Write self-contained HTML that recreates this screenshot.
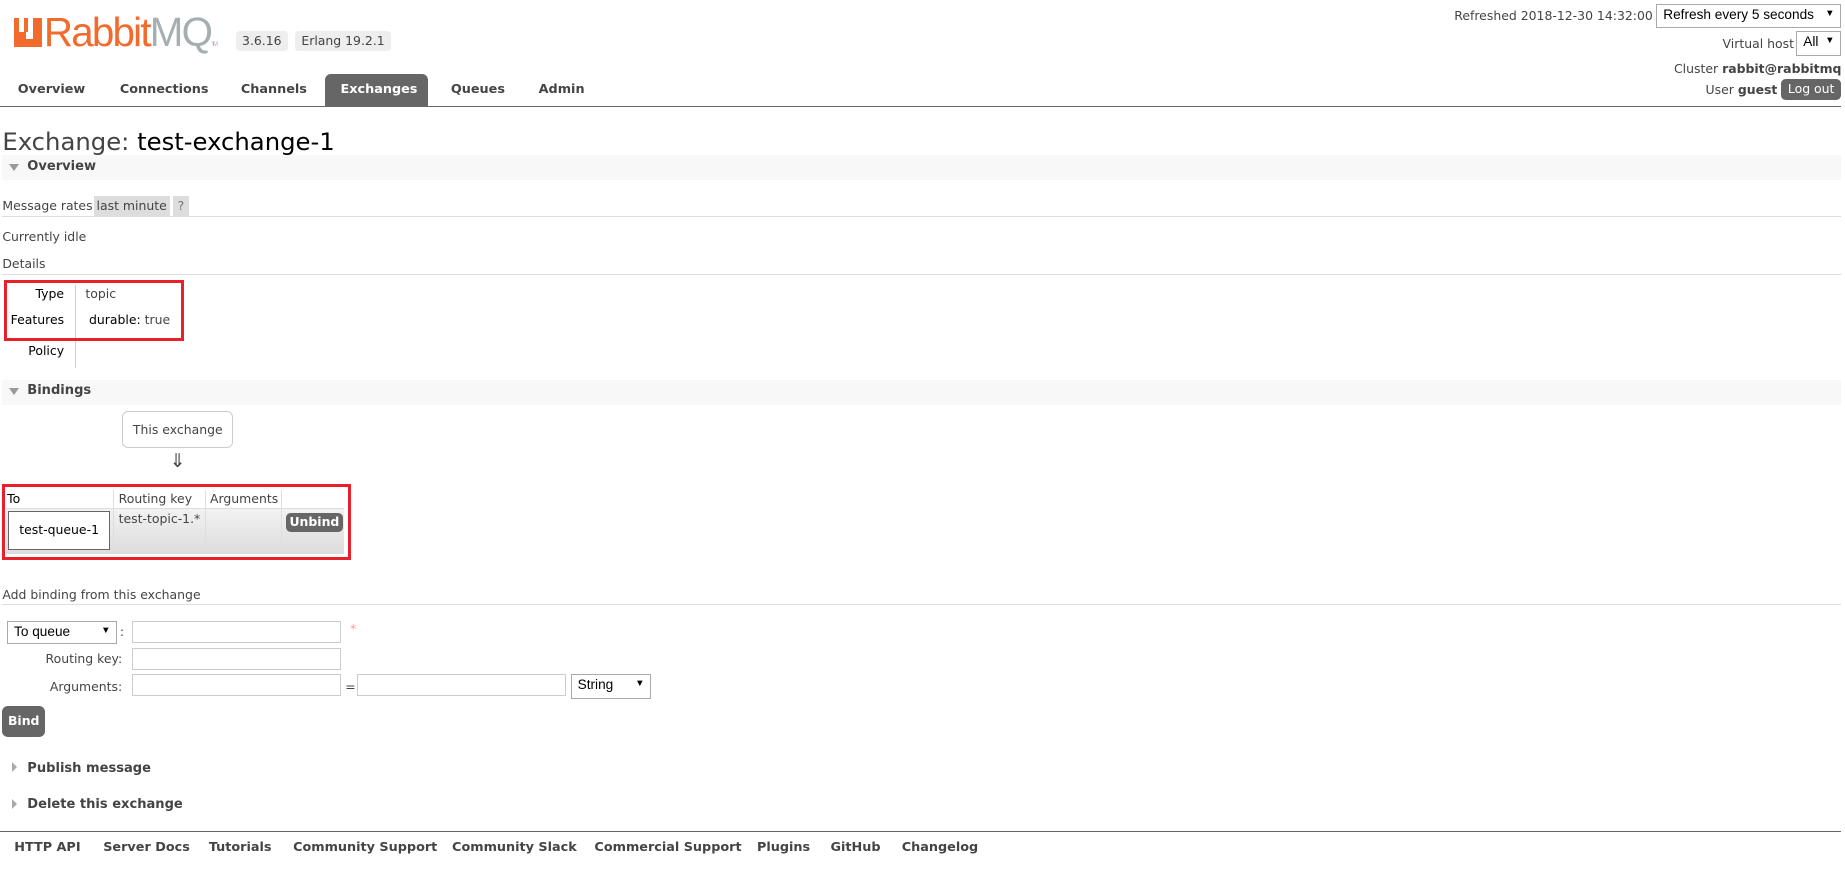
<!DOCTYPE html>
<html><head><meta charset="utf-8">
<style>
html,body{margin:0;padding:0;background:#fff;overflow:hidden;width:1845px;height:869px}
#w{zoom:1.1865;position:relative;width:1555px;height:733px;font-family:"DejaVu Sans","Liberation Sans",sans-serif;font-size:10.5px;color:#444}
.a{position:absolute;white-space:nowrap}
.b{font-weight:bold;font-size:10.8px}
.badge{background:#eee;border-radius:3px;padding:2px 5px;font-size:10.5px;color:#444}
.sel{position:absolute;border:1px solid #aaa;background:#fff;color:#000;font-size:11.5px;box-sizing:border-box;padding:2px 5px;font-family:"Liberation Sans",sans-serif}
.sel:after{content:"▼";position:absolute;right:5px;top:3px;font-size:8px}
.hdr{position:absolute;left:2px;width:1550px;height:21px;background:#f8f8f8}
.hdr .t{position:absolute;left:6px;top:7px;width:0;height:0;border-left:5px solid transparent;border-right:5px solid transparent;border-top:6px solid #999}
.hdr span{position:absolute;left:21px;top:3px;font-weight:bold;font-size:11px;color:#444}
.line{position:absolute;height:1px;background:#ddd;left:2px;width:1550px}
.inp{position:absolute;border:1px solid #ccc;background:#fff;box-sizing:border-box;height:19px}
.btn{position:absolute;background:#666;color:#fff;font-weight:bold;border-radius:4px;text-align:center}
.red{position:absolute;border:3px solid #e8202a;box-sizing:border-box}
.rt{position:absolute;width:0;height:0;border-top:5px solid transparent;border-bottom:5px solid transparent;border-left:5px solid #aaa}
</style></head><body><div id="w">
<!-- logo -->
<div class="a" style="left:12px;top:15px;width:23px;height:25px;background:#f26a2c"></div>
<div class="a" style="left:16px;top:15px;width:4px;height:12px;background:#fff"></div>
<div class="a" style="left:24px;top:15px;width:4px;height:12px;background:#fff"></div>
<div class="a" style="left:22px;top:27px;width:6px;height:6px;background:#fff"></div>
<div class="a" style="left:37px;top:8px;font-family:'Liberation Sans',sans-serif;font-size:34px;letter-spacing:-1.5px;color:#f26a2c">Rabbit<span style="color:#a5aeb0">MQ</span><span style="font-size:5px;color:#aaa">TM</span></div>
<div class="a badge" style="left:199px;top:26px">3.6.16</div>
<div class="a badge" style="left:249px;top:26px">Erlang 19.2.1</div>
<!-- tabs -->
<div class="a" style="left:274px;top:62px;width:87px;height:27px;background:#666;border-radius:5px 5px 0 0"></div>
<div class="a b" style="left:15px;top:69px">Overview</div>
<div class="a b" style="left:101px;top:69px">Connections</div>
<div class="a b" style="left:203px;top:69px">Channels</div>
<div class="a b" style="left:287px;top:69px;color:#fff">Exchanges</div>
<div class="a b" style="left:380px;top:69px">Queues</div>
<div class="a b" style="left:454px;top:69px">Admin</div>
<div class="a" style="left:0;top:89px;width:1552px;height:1px;background:#666"></div>
<!-- right header -->
<div class="a" style="right:162px;top:7px">Refreshed 2018-12-30 14:32:00</div>
<div class="sel" style="left:1396px;top:3px;width:156px;height:21px">Refresh every 5 seconds</div>
<div class="a" style="right:43px;top:30px">Virtual host</div>
<div class="sel" style="left:1514px;top:26px;width:38px;height:21px">All</div>
<div class="a" style="right:3px;top:51px">Cluster <b>rabbit@rabbitmq</b></div>
<div class="a" style="right:57px;top:69px">User <b>guest</b></div>
<div class="btn" style="left:1501px;top:67px;width:51px;height:17px;line-height:17px;font-weight:normal">Log out</div>
<!-- title -->
<div class="a" style="left:2px;top:107px;font-size:20.5px;color:#444">Exchange: <span style="color:#000">test-exchange-1</span></div>
<div class="hdr" style="top:131px"><div class="t"></div><span>Overview</span></div>
<div class="a" style="left:2px;top:167px">Message rates</div>
<div class="a" style="left:79px;top:165px;width:64px;height:17px;background:#ddd;line-height:17px;text-align:center">last minute</div>
<div class="a" style="left:146px;top:165px;width:13px;height:17px;background:#ddd;line-height:17px;text-align:center;color:#777">?</div>
<div class="line" style="top:182px"></div>
<div class="a" style="left:2px;top:193px">Currently idle</div>
<div class="a" style="left:2px;top:216px">Details</div>
<div class="line" style="top:231px"></div>
<div class="a" style="right:1501px;top:241px;color:#000">Type</div>
<div class="a" style="right:1501px;top:263px;color:#000">Features</div>
<div class="a" style="right:1501px;top:289px;color:#000">Policy</div>
<div class="a" style="left:63px;top:240px;width:1px;height:70px;background:#ccc"></div>
<div class="a" style="left:72px;top:241px">topic</div>
<div class="a" style="left:75px;top:263px;color:#000">durable: <span style="color:#444">true</span></div>
<div class="red" style="left:3px;top:236px;width:152px;height:51px"></div>
<div class="hdr" style="top:320px"><div class="t"></div><span>Bindings</span></div>
<div class="a" style="left:103px;top:346px;width:92px;height:30px;border:1px solid #ccc;border-radius:5px;line-height:30px;text-align:center">This exchange</div>
<div class="a" style="left:143px;top:379px;font-size:16px;color:#444">⇓</div>
<!-- binding table -->
<div class="a" style="left:5px;top:429px;width:285px;height:38px;background:linear-gradient(#f2f2f2,#dcdcdc)"></div>
<div class="a" style="left:95px;top:413px;width:1px;height:54px;background:#ddd"></div>
<div class="a" style="left:173px;top:413px;width:1px;height:54px;background:#ddd"></div>
<div class="a" style="left:237px;top:413px;width:1px;height:54px;background:#ddd"></div>
<div class="a" style="left:5px;top:428px;width:285px;height:1px;background:#ddd"></div>
<div class="a" style="left:6px;top:414px;color:#000">To</div>
<div class="a" style="left:100px;top:414px">Routing key</div>
<div class="a" style="left:177px;top:414px">Arguments</div>
<div class="a" style="left:7px;top:431px;width:84px;height:31px;background:#fff;border:1px solid #666;line-height:31px;text-align:center;color:#000">test-queue-1</div>
<div class="a" style="left:100px;top:431px">test-topic-1.*</div>
<div class="btn" style="left:241px;top:432px;width:48px;height:16px;line-height:16px">Unbind</div>
<div class="red" style="left:2px;top:408px;width:294px;height:64px"></div>
<!-- add binding -->
<div class="a" style="left:2px;top:495px">Add binding from this exchange</div>
<div class="line" style="top:509px"></div>
<div class="sel" style="left:6px;top:523px;width:93px;height:20px;color:#000">To queue</div>
<div class="a" style="left:101px;top:526px">:</div>
<div class="inp" style="left:111px;top:523px;width:176px"></div>
<div class="a" style="left:295px;top:523px;color:#f99">*</div>
<div class="a" style="right:1452px;top:549px">Routing key:</div>
<div class="inp" style="left:111px;top:546px;width:176px"></div>
<div class="a" style="right:1452px;top:572px">Arguments:</div>
<div class="inp" style="left:111px;top:568px;width:176px"></div>
<div class="a" style="left:291px;top:572px">=</div>
<div class="inp" style="left:301px;top:568px;width:176px"></div>
<div class="sel" style="left:481px;top:568px;width:68px;height:21px;color:#000">String</div>
<div class="btn" style="left:2px;top:595px;width:36px;height:26px;line-height:26px;border-radius:5px">Bind</div>
<div class="rt" style="left:10px;top:642px"></div>
<div class="a b" style="left:23px;top:641px;font-size:11px">Publish message</div>
<div class="rt" style="left:10px;top:673px"></div>
<div class="a b" style="left:23px;top:672px;font-size:11px">Delete this exchange</div>
<div class="a" style="left:0;top:700px;width:1552px;height:1px;background:#666"></div>
<div class="a b" style="left:12px;top:708px">HTTP API</div>
<div class="a b" style="left:87px;top:708px">Server Docs</div>
<div class="a b" style="left:176px;top:708px">Tutorials</div>
<div class="a b" style="left:247px;top:708px">Community Support</div>
<div class="a b" style="left:381px;top:708px">Community Slack</div>
<div class="a b" style="left:501px;top:708px">Commercial Support</div>
<div class="a b" style="left:638px;top:708px">Plugins</div>
<div class="a b" style="left:700px;top:708px">GitHub</div>
<div class="a b" style="left:760px;top:708px">Changelog</div>
</div></body></html>
